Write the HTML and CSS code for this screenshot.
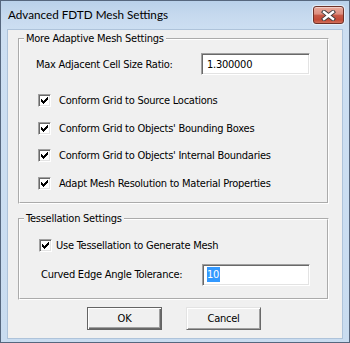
FILE: index.html
```html
<!DOCTYPE html>
<html lang="en">
<head>
<meta charset="utf-8">
<title>Advanced FDTD Mesh Settings</title>
<link rel="stylesheet" href="styles.css">
</head>
<body>
<div class="window">
  <div class="titlebar">
    <span class="title">Advanced FDTD Mesh Settings</span>
    <button class="close" type="button" aria-label="Close">
      <svg width="15" height="11" viewBox="0 0 15 11">
        <path d="M3 2 L12 9 M12 2 L3 9" stroke="#3e3a3a" stroke-width="4.2" stroke-linecap="square" fill="none"/>
        <path d="M3 2 L12 9 M12 2 L3 9" stroke="#ffffff" stroke-width="2.4" stroke-linecap="square" fill="none"/>
      </svg>
    </button>
  </div>
  <div class="client">
    <fieldset class="group group-adaptive">
      <legend>More Adaptive Mesh Settings</legend>
      <div class="group-body body-adaptive">
        <div class="field-row">
          <span class="field-label label-ratio">Max Adjacent Cell Size Ratio:</span>
          <div class="textbox textbox-ratio">1.300000</div>
        </div>
        <div class="checks">
          <div class="check-row">
            <span class="checkbox"><svg width="11" height="11" viewBox="0 0 11 11" shape-rendering="crispEdges"><path d="M8 2h1v1h-1z M7 3h2v1h-2z M2 4h1v1h-1z M6 4h3v1h-3z M2 5h2v1h-2z M5 5h3v1h-3z M2 6h5v1h-5z M3 7h3v1h-3z M4 8h1v1h-1z" fill="#000"/></svg></span>
            <span class="check-label">Conform Grid to Source Locations</span>
          </div>
          <div class="check-row">
            <span class="checkbox"><svg width="11" height="11" viewBox="0 0 11 11" shape-rendering="crispEdges"><path d="M8 2h1v1h-1z M7 3h2v1h-2z M2 4h1v1h-1z M6 4h3v1h-3z M2 5h2v1h-2z M5 5h3v1h-3z M2 6h5v1h-5z M3 7h3v1h-3z M4 8h1v1h-1z" fill="#000"/></svg></span>
            <span class="check-label">Conform Grid to Objects' Bounding Boxes</span>
          </div>
          <div class="check-row">
            <span class="checkbox"><svg width="11" height="11" viewBox="0 0 11 11" shape-rendering="crispEdges"><path d="M8 2h1v1h-1z M7 3h2v1h-2z M2 4h1v1h-1z M6 4h3v1h-3z M2 5h2v1h-2z M5 5h3v1h-3z M2 6h5v1h-5z M3 7h3v1h-3z M4 8h1v1h-1z" fill="#000"/></svg></span>
            <span class="check-label">Conform Grid to Objects' Internal Boundaries</span>
          </div>
          <div class="check-row">
            <span class="checkbox"><svg width="11" height="11" viewBox="0 0 11 11" shape-rendering="crispEdges"><path d="M8 2h1v1h-1z M7 3h2v1h-2z M2 4h1v1h-1z M6 4h3v1h-3z M2 5h2v1h-2z M5 5h3v1h-3z M2 6h5v1h-5z M3 7h3v1h-3z M4 8h1v1h-1z" fill="#000"/></svg></span>
            <span class="check-label">Adapt Mesh Resolution to Material Properties</span>
          </div>
        </div>
      </div>
    </fieldset>

    <fieldset class="group group-tess">
      <legend>Tessellation Settings</legend>
      <div class="group-body body-tess">
        <div class="check-row check-row-tight">
          <span class="checkbox"><svg width="11" height="11" viewBox="0 0 11 11" shape-rendering="crispEdges"><path d="M8 2h1v1h-1z M7 3h2v1h-2z M2 4h1v1h-1z M6 4h3v1h-3z M2 5h2v1h-2z M5 5h3v1h-3z M2 6h5v1h-5z M3 7h3v1h-3z M4 8h1v1h-1z" fill="#000"/></svg></span>
          <span class="check-label">Use Tessellation to Generate Mesh</span>
        </div>
        <div class="field-row field-row-tess">
          <span class="field-label label-angle">Curved Edge Angle Tolerance:</span>
          <div class="textbox textbox-angle"><span class="selected">10</span></div>
        </div>
      </div>
    </fieldset>

    <div class="buttons">
      <button class="btn btn-default" type="button">OK</button>
      <button class="btn" type="button">Cancel</button>
    </div>
  </div>
</div>
</body>
</html>
```

FILE: styles.css
```css
html, body {
  margin: 0;
  padding: 0;
  background: #ffffff;
}

.window {
  width: 350px;
  height: 343px;
  box-sizing: border-box;
  border: 1px solid #56677e;
  padding: 0 7px 4px 7px;
  display: flex;
  flex-direction: column;
  background: linear-gradient(to bottom, #b9d1ea 0px, #c6d9ee 14px, #cddff2 30px, #c9dcf0 100%);
}

.titlebar {
  height: 29px;
  flex: 0 0 29px;
  display: flex;
  align-items: flex-start;
  justify-content: space-between;
}

.title {
  font-family: "Lato", "Liberation Sans", sans-serif;
  font-size: 11.7px;
  line-height: 16px;
  color: #000;
  padding-top: 5px;
}

.close {
  margin: 5px -2px 0 0;
  width: 31px;
  height: 18px;
  padding: 0;
  box-sizing: border-box;
  border: 1px solid #6e3128;
  border-radius: 3px;
  background: linear-gradient(to bottom, #e9a99b 0%, #dc8d7e 45%, #c75b48 50%, #c24a36 80%, #d2705c 100%);
  box-shadow: 0 0 0 1px rgba(255, 255, 255, 0.55), inset 0 1px 0 rgba(255, 255, 255, 0.45);
  display: flex;
  align-items: center;
  justify-content: center;
}

.close svg {
  display: block;
}

.client {
  flex: 1 1 auto;
  background: #f0f0f0;
  padding: 2px 0 0 0;
  box-shadow: 0 0 0 1px #aec3da;
  font-family: "DejaVu Sans Condensed", "DejaVu Sans", sans-serif;
  font-size: 11px;
  letter-spacing: -0.25px;
  line-height: 13px;
  color: #000;
}

.group {
  margin: 0 0 0 10px;
  padding: 0;
  width: 311px;
  box-sizing: border-box;
  border: 2px groove #ffffff;
  min-width: 0;
}

.group legend {
  margin-left: 4px;
  padding: 0 2px;
  line-height: 14px;
}

.body-adaptive {
  padding: 7px 0 12px 16px;
}

.group-tess {
  margin-top: 8px;
}

.body-tess {
  padding: 13px 0 12px 19px;
}

.field-row {
  display: flex;
  align-items: center;
}

.label-ratio {
  flex: 0 0 165px;
}

.field-row-tess {
  margin-top: 12px;
}

.label-angle {
  margin-left: 2px;
  flex: 0 0 161px;
}

.textbox {
  height: 22px;
  box-sizing: border-box;
  border: 1px solid;
  border-color: #a0a0a0 #ffffff #ffffff #a0a0a0;
  box-shadow: inset 1px 1px 0 #696969, inset -1px -1px 0 #e3e3e3;
  background: #ffffff;
  display: flex;
  align-items: center;
}

.textbox-ratio {
  width: 109px;
  padding-left: 5px;
}

.textbox-angle {
  width: 108px;
  padding-left: 4px;
}

.selected {
  background: #3399ff;
  color: #ffffff;
  line-height: 15px;
  padding: 0 1px 0 0;
}

.checks {
  margin-top: 19px;
  display: flex;
  flex-direction: column;
  gap: 14.5px;
}

.check-row {
  display: flex;
  align-items: center;
  gap: 8px;
  height: 13px;
  padding-left: 2px;
}

.check-row-tight {
  gap: 4px;
  padding-left: 0;
}

.checkbox {
  width: 13px;
  height: 13px;
  flex: 0 0 13px;
  box-sizing: border-box;
  border: 1px solid;
  border-color: #a0a0a0 #ffffff #ffffff #a0a0a0;
  box-shadow: inset 1px 1px 0 #696969, inset -1px -1px 0 #e3e3e3;
  background: #ffffff;
}

.checkbox svg {
  display: block;
}

.check-label {
  white-space: nowrap;
}

.buttons {
  margin-top: 7px;
  display: flex;
  justify-content: center;
  gap: 24px;
  padding-right: 2px;
}

.btn {
  width: 75px;
  height: 23px;
  box-sizing: border-box;
  margin: 0;
  padding: 0;
  font-family: "DejaVu Sans Condensed", "DejaVu Sans", sans-serif;
  font-size: 11px;
  letter-spacing: -0.25px;
  color: #000;
  background: #f0f0f0;
  border: 1px solid;
  border-color: #e3e3e3 #696969 #696969 #e3e3e3;
  box-shadow: inset 1px 1px 0 #ffffff, inset -1px -1px 0 #a0a0a0;
}

.btn-default {
  border-color: #646464;
  box-shadow: inset 1px 1px 0 #ffffff, inset -1px -1px 0 #696969, inset -2px -2px 0 #a0a0a0;
}
```
